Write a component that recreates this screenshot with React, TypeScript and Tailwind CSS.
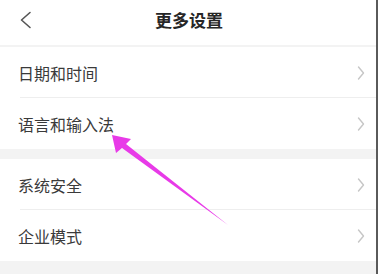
import React from 'react';

const font = { fontFamily: '"Noto Sans CJK SC", "Noto Sans", sans-serif' };

const Chevron = () => (
  <svg width="8" height="14" viewBox="0 0 8 14" className="text-[#c6c6c6]">
    <polyline points="1.5,1 6.5,7 1.5,13" fill="none" stroke="currentColor" strokeWidth="1.4" strokeLinecap="round" strokeLinejoin="round" />
  </svg>
);

const Row = ({ label, divider }: { label: string; divider?: boolean }) => (
  <div className="h-[51px] flex items-center pl-[18px] pr-[11px] relative">
    <span className="flex-1 text-[16px] text-[#3a3a3a]">{label}</span>
    <Chevron />
    {divider && <div className="absolute left-[20px] right-0 bottom-0 h-px bg-[#eeeeee]" />}
  </div>
);

const App: React.FC = () => {
  return (
    <div style={font} className="relative w-[378px] h-[274px] bg-[#f3f3f3] border-r-2 border-[#5a5a5a] overflow-hidden">
      <div className="h-[45px] bg-white flex items-center relative">
        <svg width="14" height="18" viewBox="0 0 14 18" className="absolute left-[19px] top-[11px] text-[#555]">
          <polyline points="11,1.5 2.5,9 11,16.5" fill="none" stroke="currentColor" strokeWidth="1.6" strokeLinecap="round" strokeLinejoin="round" />
        </svg>
        <div className="flex-1 text-center text-[17px] font-semibold text-[#262626] pl-[2px] pb-[5px]">更多设置</div>
      </div>
      <div className="h-[2px]" />
      <div className="bg-white">
        <Row label="日期和时间" divider />
        <Row label="语言和输入法" />
      </div>
      <div className="h-[10px]" />
      <div className="bg-white">
        <Row label="系统安全" divider />
        <Row label="企业模式" />
      </div>

      <svg className="absolute inset-0 pointer-events-none" width="378" height="274" viewBox="0 0 378 274">
        <polygon points="112,135 131,139 126,144 228,225 122,148 116,153" fill="#e83ae8" />
      </svg>
    </div>
  );
};

export default App;
